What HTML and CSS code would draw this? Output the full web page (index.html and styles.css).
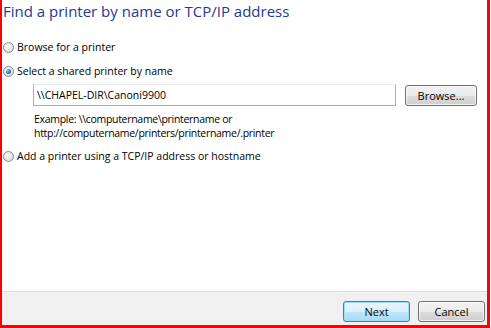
FILE: index.html
```html
<!DOCTYPE html>
<html lang="en">

<head>
    <meta charset="UTF-8">
    <title>Find a printer</title>
    <link rel="stylesheet" href="styles.css">
</head>

<body>
    <div class="dialog">
        <div class="content">
            <h1 class="title">Find a printer by name or TCP/IP address</h1>

            <label class="option option-first">
                <span class="radio"></span>
                <span>Browse for a printer</span>
            </label>

            <label class="option">
                <span class="radio checked"></span>
                <span>Select a shared printer by name</span>
            </label>

            <div class="share-row">
                <div class="textbox">\\CHAPEL-DIR\Canoni9900</div>
                <button class="btn btn-browse">Browse...</button>
            </div>

            <p class="example">Example: \\computername\printername or<br>http://computername/printers/printername/.printer</p>

            <label class="option option-last">
                <span class="radio"></span>
                <span>Add a printer using a TCP/IP address or hostname</span>
            </label>
        </div>

        <div class="footer">
            <button class="btn btn-default">Next</button>
            <button class="btn">Cancel</button>
        </div>
    </div>
</body>

</html>
```

FILE: styles.css
```css
body {
    margin: 0;
    padding: 0;
    background-color: #fff;
    font-family: "Open Sans", "Liberation Sans", sans-serif;
    font-size: 10.5px;
    color: #000;
}

.dialog {
    width: 490px;
    height: 328px;
    box-sizing: border-box;
    border-left: 2px solid #f00;
    border-right: 3px solid #f00;
    border-bottom: 3px solid #f00;
    display: flex;
    flex-direction: column;
}

.content {
    flex: 1;
    padding: 0 0 0 1px;
}

.title {
    margin: 0;
    padding-top: 1px;
    font-size: 15px;
    font-weight: normal;
    line-height: 20px;
    color: #1e3a94;
}

.option {
    display: flex;
    align-items: center;
    height: 14px;
    gap: 3px;
    margin-top: 10px;
}

.option-first {
    margin-top: 19px;
}

.option-last {
    margin-top: 9px;
}

.radio {
    width: 11px;
    height: 11px;
    box-sizing: border-box;
    border: 1px solid #8f8f8f;
    border-radius: 50%;
    background: radial-gradient(circle at 40% 35%, #fdfdfd 0%, #e6e6e6 55%, #cfcfcf 100%);
    position: relative;
    flex-shrink: 0;
}

.radio.checked::after {
    content: "";
    position: absolute;
    left: 2px;
    top: 2px;
    width: 5px;
    height: 5px;
    border-radius: 50%;
    background: radial-gradient(circle at 35% 35%, #8fd3f5 0%, #2c7fb8 50%, #1a4c74 100%);
}

.share-row {
    display: flex;
    align-items: center;
    margin: 6px 0 0 30px;
}

.textbox {
    width: 363px;
    height: 22px;
    box-sizing: border-box;
    border: 1px solid #abadb3;
    border-top-color: #e3e9ef;
    border-radius: 1px;
    padding: 0 3px;
    line-height: 20px;
}

.btn {
    font-family: inherit;
    font-size: 11px;
    color: #000;
    height: 21px;
    width: 67px;
    padding: 0;
    border: 1px solid #707070;
    border-radius: 3px;
    background: linear-gradient(#f2f2f2 0%, #ebebeb 50%, #dddddd 51%, #cfcfcf 100%);
    box-shadow: inset 0 0 0 1px rgba(255, 255, 255, 0.7);
}

.btn-browse {
    width: 72px;
    margin-left: 9px;
}

.example {
    margin: 6px 0 0 31px;
    line-height: 14px;
    letter-spacing: -0.3px;
}

.footer {
    height: 34px;
    border-top: 1px solid #dfdfdf;
    background-color: #f0f0f0;
    display: flex;
    justify-content: flex-end;
    align-items: flex-start;
    gap: 8px;
    padding: 9px 2px 0 0;
    box-sizing: border-box;
}

.btn-default {
    border-color: #3c7fb1;
    background: linear-gradient(#eaf6fd 0%, #d9f0fc 50%, #bee6fd 51%, #a7d9f5 100%);
    box-shadow: inset 0 0 0 1px #9cddfb;
}
```
